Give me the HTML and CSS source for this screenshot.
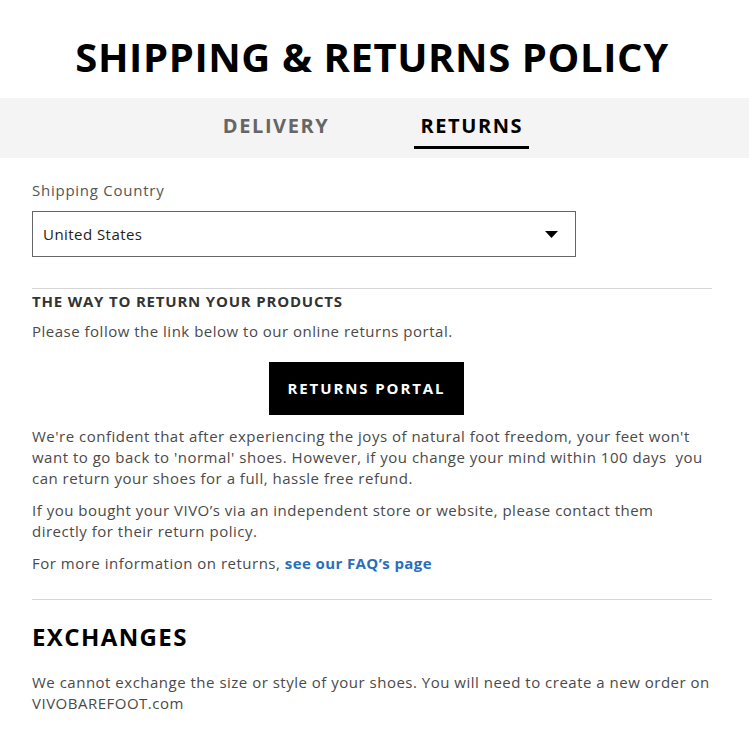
FILE: index.html
```html
<!DOCTYPE html>
<html lang="en">
<head>
<meta charset="utf-8">
<title>Shipping &amp; Returns Policy</title>
<link rel="stylesheet" href="styles.css">
</head>
<body>
<div class="page">
  <h1 class="title">SHIPPING &amp; RETURNS POLICY</h1>
</div>
<nav class="tabs">
  <a class="tab">DELIVERY</a>
  <a class="tab active">RETURNS</a>
</nav>
<div class="page content">
  <label class="label">Shipping Country</label>
  <div class="select">
    <span>United States</span>
    <svg class="caret" width="13" height="7" viewBox="0 0 13 7"><path d="M0 0H13L6.5 7Z" fill="#000"/></svg>
  </div>
  <hr class="rule first">
  <h3 class="subhead">THE WAY TO RETURN YOUR PRODUCTS</h3>
  <p class="text">Please follow the link below to our online returns portal.</p>
  <div class="btn-row"><a class="btn">RETURNS PORTAL</a></div>
  <p class="text">We're confident that after experiencing the joys of natural foot freedom, your feet won't want to go back to 'normal' shoes. However, if you change your mind within 100 days&nbsp; you can return your shoes for a full, hassle free refund.</p>
  <p class="text">If you bought your VIVO’s via an independent store or website, please contact them directly for their return policy.</p>
  <p class="text">For more information on returns, <a class="link">see our FAQ’s page</a></p>
  <hr class="rule second">
  <h2 class="section">EXCHANGES</h2>
  <p class="text">We cannot exchange the size or style of your shoes. You will need to create a new order on VIVOBAREFOOT.com</p>
</div>
</body>
</html>
```
FILE: styles.css
```css
* { box-sizing: border-box; }
html, body { margin: 0; padding: 0; background: #fff; }
body { font-family: "Open Sans", "Liberation Sans", sans-serif; color: #444; }
.page { width: 680px; margin-left: 32px; }
.title {
  margin: 0;
  padding: 33px 0 0;
  height: 98px;
  text-align: center;
  font-size: 40px;
  line-height: 48px;
  font-weight: 700;
  letter-spacing: 0.6px;
  color: #000;
}
.tabs {
  background: #f4f4f4;
  height: 60px;
  display: flex;
  justify-content: center;
  gap: 79px;
  padding-right: 3px;
}
.tab {
  display: block;
  padding: 14px 6px 0;
  height: 51px;
  font-size: 20px;
  line-height: 28px;
  font-weight: 700;
  color: #666;
  letter-spacing: 1.6px;
}
.tab.active { color: #000; border-bottom: 3px solid #000; }
.content { padding-top: 22px; }
.label { display: block; font-size: 15px; line-height: 20px; color: #555; margin-bottom: 11px; letter-spacing: 0.75px; }
.select {
  width: 544px;
  height: 46px;
  border: 1px solid #666;
  display: flex;
  align-items: center;
  justify-content: space-between;
  padding: 0 17px 0 10px;
  font-size: 15px;
  letter-spacing: 0.45px;
  color: #222;
}
.caret { display: block; }
.rule { border: 0; border-top: 1px solid #d6d6d6; margin: 0; }
.rule.first { margin-top: 31px; }
.subhead { margin: 2px 0 0; font-size: 15px; line-height: 20px; font-weight: 700; letter-spacing: 0.8px; color: #333; }
.text { margin: 11px 0 0; font-size: 15px; line-height: 21px; letter-spacing: 0.5px; color: #4a4a4a; }
.subhead + .text { margin-top: 10px; }
.btn-row { display: flex; justify-content: center; margin: 20px 0 10px; padding-right: 11px; }
.btn {
  display: block;
  width: 195px;
  height: 53px;
  background: #000;
  color: #fff;
  font-size: 15px;
  font-weight: 700;
  letter-spacing: 1.9px;
  line-height: 53px;
  text-align: center;
}
.link { color: #2a6ebb; font-weight: 700; letter-spacing: 0.4px; }
.rule.second { margin-top: 25px; }
.section { margin: 22px 0 0; font-size: 24px; line-height: 30px; font-weight: 700; letter-spacing: 1.4px; color: #000; }
.section + .text { margin-top: 20px; }
```
